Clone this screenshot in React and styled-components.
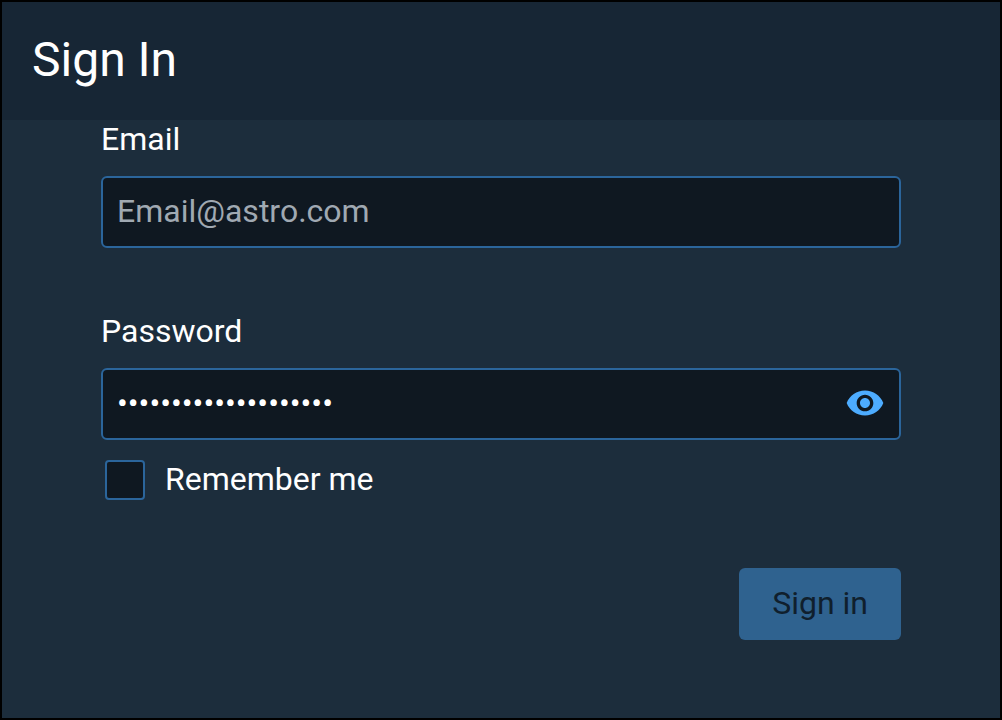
import React, { useState } from "react";
import styled, { createGlobalStyle } from "styled-components";

const GlobalStyle = createGlobalStyle`
  *, *::before, *::after { box-sizing: border-box; }
  body {
    margin: 0;
    background: #1c2d3c;
    color: #fff;
    font-family: Roboto, "Liberation Sans", sans-serif;
    font-size: 32px;
    line-height: 38px;
  }
`;

const Panel = styled.main`
  min-height: 100vh;
  border: 2px solid #000;
  background: #1c2d3c;
`;

const Header = styled.header`
  padding: 26px 30px 28px;
  background: #172635;
`;

const Title = styled.h1`
  margin: 0;
  font-size: 48px;
  font-weight: 400;
  line-height: 64px;
`;

const Form = styled.form`
  display: flex;
  flex-direction: column;
  padding: 0 99px 40px;
`;

const Field = styled.div`
  display: flex;
  flex-direction: column;
  gap: 18px;
  margin-bottom: ${(p) => p.$space}px;
`;

const Label = styled.label`
  display: block;
`;

const InputBox = styled.div`
  display: flex;
  align-items: center;
  height: 72px;
  padding: 0 14px 2px;
  border: 2px solid #2b659b;
  border-radius: 6px;
  background: #0f1821;
`;

const Input = styled.input`
  flex: 1;
  min-width: 0;
  padding: 0;
  border: 0;
  outline: 0;
  background: transparent;
  color: #fff;
  font: inherit;

  &::placeholder {
    color: #a0a9b2;
    opacity: 1;
  }
`;

const EyeButton = styled.button`
  display: flex;
  padding: 0;
  border: 0;
  background: none;
  color: #4dacff;
  cursor: pointer;
`;

const Remember = styled.label`
  display: flex;
  align-items: flex-start;
  gap: 20px;
  padding-left: 4px;
`;

const Checkbox = styled.input`
  appearance: none;
  width: 40px;
  height: 40px;
  margin: 0;
  border: 2px solid #2b659b;
  border-radius: 4px;
  background: #0f1821;

  &:checked {
    background: #4dacff;
  }
`;

const SubmitButton = styled.button`
  align-self: flex-end;
  height: 72px;
  margin-top: 68px;
  padding: 0 33px 2px;
  border: 0;
  border-radius: 6px;
  background: #2f628f;
  color: #101f2d;
  font: inherit;
`;

export default function App() {
  const [visible, setVisible] = useState(false);
  return (
    <>
      <GlobalStyle />
      <Panel>
        <Header>
          <Title>Sign In</Title>
        </Header>
        <Form onSubmit={(e) => e.preventDefault()}>
          <Field $space={64}>
            <Label htmlFor="email">Email</Label>
            <InputBox>
              <Input id="email" type="email" placeholder="Email@astro.com" />
            </InputBox>
          </Field>
          <Field $space={20}>
            <Label htmlFor="password">Password</Label>
            <InputBox>
              <Input
                id="password"
                type={visible ? "text" : "password"}
                defaultValue="astropassword1234567"
              />
              <EyeButton
                type="button"
                aria-label="Toggle password visibility"
                onClick={() => setVisible(!visible)}
              >
                <svg width="40" height="40" viewBox="0 0 24 24" fill="currentColor">
                  <path d="M12 4.5C7 4.5 2.73 7.61 1 12c1.73 4.39 6 7.5 11 7.5s9.27-3.11 11-7.5c-1.73-4.39-6-7.5-11-7.5zM12 17c-2.76 0-5-2.24-5-5s2.24-5 5-5 5 2.24 5 5-2.24 5-5 5zm0-8c-1.66 0-3 1.34-3 3s1.34 3 3 3 3-1.34 3-3-1.34-3-3-3z" />
                </svg>
              </EyeButton>
            </InputBox>
          </Field>
          <Remember>
            <Checkbox type="checkbox" />
            Remember me
          </Remember>
          <SubmitButton type="submit" disabled>
            Sign in
          </SubmitButton>
        </Form>
      </Panel>
    </>
  );
}
